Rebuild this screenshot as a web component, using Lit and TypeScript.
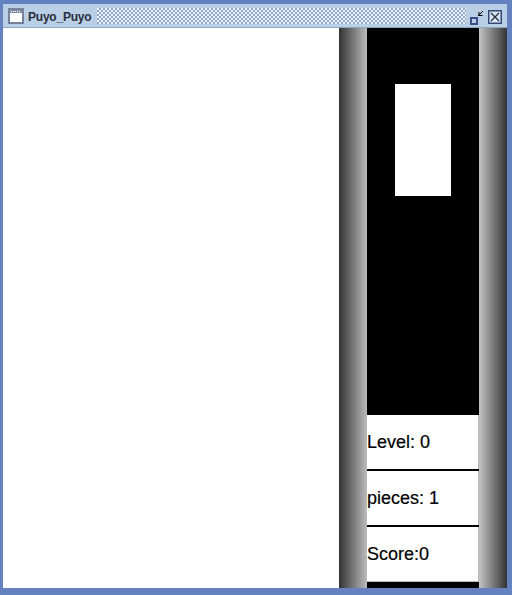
import { LitElement, html, css } from "lit";
import { customElement } from "lit/decorators.js";

@customElement("app-root")
export class AppRoot extends LitElement {
  static styles = css`
    :host { display: block; width: 512px; height: 595px; }
    .frame { width: 512px; height: 595px; box-sizing: border-box; background: #6382bf; padding: 4px 5px 7px 3px; display: flex; flex-direction: column; font-family: "Liberation Sans", Arial, sans-serif; }
    .title { height: 23px; flex: none; background: #b8cfe5; border-bottom: 1px solid #8fa6c4; display: flex; align-items: center; }
    .appicon { width: 16px; height: 16px; margin-left: 5px; flex: none; display: block; }
    .name { font-size: 12px; font-weight: 700; color: #2a2d3c; margin-left: 4px; flex: none; letter-spacing: -0.22px; position: relative; top: 1px; }
    .dots { flex: 1; height: 16px; margin: 1px 4px 0 6px; background-color: #b8cfe5;
      background-image:
        conic-gradient(transparent 75%, #eef3f9 0),
        conic-gradient(transparent 75%, #eef3f9 0),
        conic-gradient(transparent 75%, #8fa8ca 0),
        conic-gradient(transparent 75%, #8fa8ca 0);
      background-size: 4px 4px;
      background-position: 0 0, 2px 2px, 2px 0, 0 2px;
    }
    .btn { display: block; flex: none; position: relative; top: 1px; }
    .b1 { width: 16px; height: 16px; margin-right: 2px; }
    .b2 { width: 14px; height: 14px; margin-right: 5px; }
    .body { flex: 1; min-height: 0; display: flex; background: #fff; }
    .canvas { width: 336px; flex: none; background: #fff; }
    .wall { width: 28px; flex: none; }
    .wl { background: linear-gradient(to right, #333, #bbb); }
    .wr { background: linear-gradient(to right, #c4c4c4, #333); }
    .mid { width: 112px; flex: none; background: #000; display: flex; flex-direction: column; }
    .preview { height: 387px; flex: none; padding: 56px 28px 0; box-sizing: border-box; }
    .piece { width: 56px; height: 112px; background: #fff; }
    .row { height: 54px; flex: none; box-sizing: border-box; background: #fff; border-right: 1px solid #b8b8b8; margin-bottom: 2px; display: flex; align-items: center; font-size: 18px; color: #000; -webkit-text-stroke: 0.2px #000; }
    .row.last { height: 55px; margin-bottom: 0; border-bottom: 1px solid #b8b8b8; }
  `;
  render() {
    return html`<div class="frame">
      <div class="title">
        <svg class="appicon" viewBox="0 0 16 16"><rect x="1" y="1" width="14" height="14" fill="#fff" stroke="#76849b" stroke-width="2"/><rect x="2" y="2" width="12" height="3" fill="#7f8da6"/><path d="M3 3.5h1M5 3.5h1M7 3.5h1M9 3.5h1M11 3.5h1" stroke="#fff"/></svg>
        <span class="name">Puyo_Puyo</span>
        <div class="dots"></div>
        <svg class="btn b1" viewBox="0 0 16 16"><path d="M8 7 13 2M9 3v3.5h3.5" fill="none" stroke="#000" stroke-width="1"/><rect x="1" y="9" width="6" height="6" fill="#b8cfe5" stroke="#3b4f86" stroke-width="2"/></svg>
        <svg class="btn b2" viewBox="0 0 14 14"><rect x="0.75" y="0.75" width="12.5" height="12.5" fill="#d8e4f1" stroke="#34497a" stroke-width="1.5"/><path d="M3 3 11 11M11 3 3 11" stroke="#222a3a" stroke-width="1.2"/></svg>
      </div>
      <div class="body">
        <div class="canvas"></div>
        <div class="wall wl"></div>
        <div class="mid">
          <div class="preview"><div class="piece"></div></div>
          <div class="row">Level: 0</div>
          <div class="row">pieces: 1</div>
          <div class="row last">Score:0</div>
        </div>
        <div class="wall wr"></div>
      </div>
    </div>`;
  }
}
